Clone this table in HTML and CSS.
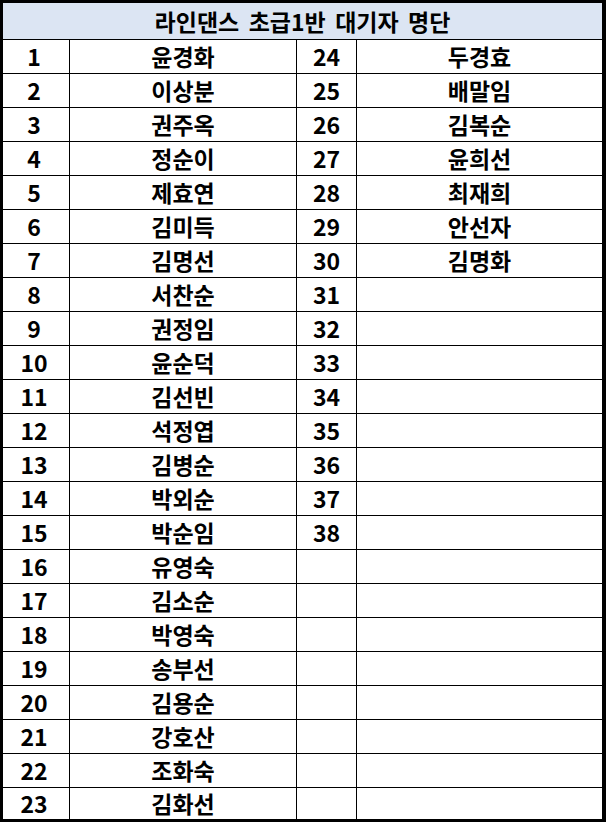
FILE: index.html
```html
<!DOCTYPE html>
<html lang="ko">
<head>
<meta charset="utf-8">
<title>라인댄스 초급1반 대기자 명단</title>
<link rel="stylesheet" href="styles.css">
</head>
<body>
<div class="sheet">
  <div class="title">라인댄스 초급1반 대기자 명단</div>
  <div class="c">1</div><div class="c">윤경화</div><div class="c">24</div><div class="c">두경효</div>
  <div class="c">2</div><div class="c">이상분</div><div class="c">25</div><div class="c">배말임</div>
  <div class="c">3</div><div class="c">권주옥</div><div class="c">26</div><div class="c">김복순</div>
  <div class="c">4</div><div class="c">정순이</div><div class="c">27</div><div class="c">윤희선</div>
  <div class="c">5</div><div class="c">제효연</div><div class="c">28</div><div class="c">최재희</div>
  <div class="c">6</div><div class="c">김미득</div><div class="c">29</div><div class="c">안선자</div>
  <div class="c">7</div><div class="c">김명선</div><div class="c">30</div><div class="c">김명화</div>
  <div class="c">8</div><div class="c">서찬순</div><div class="c">31</div><div class="c"></div>
  <div class="c">9</div><div class="c">권정임</div><div class="c">32</div><div class="c"></div>
  <div class="c">10</div><div class="c">윤순덕</div><div class="c">33</div><div class="c"></div>
  <div class="c">11</div><div class="c">김선빈</div><div class="c">34</div><div class="c"></div>
  <div class="c">12</div><div class="c">석정엽</div><div class="c">35</div><div class="c"></div>
  <div class="c">13</div><div class="c">김병순</div><div class="c">36</div><div class="c"></div>
  <div class="c">14</div><div class="c">박외순</div><div class="c">37</div><div class="c"></div>
  <div class="c">15</div><div class="c">박순임</div><div class="c">38</div><div class="c"></div>
  <div class="c">16</div><div class="c">유영숙</div><div class="c"></div><div class="c"></div>
  <div class="c">17</div><div class="c">김소순</div><div class="c"></div><div class="c"></div>
  <div class="c">18</div><div class="c">박영숙</div><div class="c"></div><div class="c"></div>
  <div class="c">19</div><div class="c">송부선</div><div class="c"></div><div class="c"></div>
  <div class="c">20</div><div class="c">김용순</div><div class="c"></div><div class="c"></div>
  <div class="c">21</div><div class="c">강호산</div><div class="c"></div><div class="c"></div>
  <div class="c">22</div><div class="c">조화숙</div><div class="c"></div><div class="c"></div>
  <div class="c">23</div><div class="c">김화선</div><div class="c"></div><div class="c"></div>
</div>
</body>
</html>
```
FILE: styles.css
```css
html, body {
  margin: 0;
  padding: 0;
  background: #fff;
}
.sheet {
  box-sizing: border-box;
  width: 606px;
  height: 822px;
  display: grid;
  grid-template-columns: 66px 226px 59px 245px;
  grid-template-rows: 36px repeat(22, 33px) 31px;
  gap: 1px;
  background: #000;
  border-style: solid;
  border-color: #000;
  border-width: 3px 4px 3px 3px;
  font-family: "Noto Sans CJK KR", "Noto Sans", sans-serif;
  font-weight: 700;
  font-size: 23px;
  color: #000;
}
.title {
  grid-column: 1 / -1;
  background: #dce5f3;
  display: flex;
  align-items: center;
  justify-content: center;
  word-spacing: 3px;
}
.c {
  background: #fff;
  display: flex;
  align-items: center;
  justify-content: center;
  line-height: 1;
}
.c:nth-child(4n+2) {
  padding-right: 4px;
}
```
